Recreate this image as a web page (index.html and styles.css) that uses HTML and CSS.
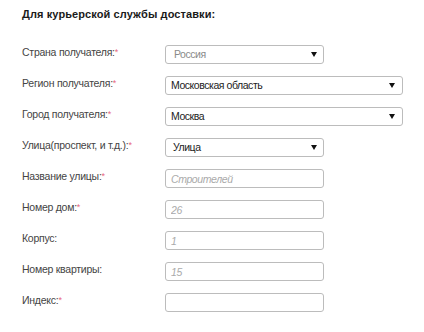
FILE: index.html
```html
<!DOCTYPE html>
<html lang="ru">
<head>
<meta charset="utf-8">
<link rel="stylesheet" href="styles.css">
</head>
<body>
<div class="form">
  <h2 class="title">Для курьерской службы доставки:</h2>
  <div class="rows">
    <div class="row">
      <label class="label">Страна получателя:<span class="req">*</span></label>
      <div class="sel short muted"><span class="val">Россия</span><svg class="arrow" width="6" height="5" viewBox="0 0 6 5"><path d="M0 0H6L3 5Z" fill="#111"/></svg></div>
    </div>
    <div class="row">
      <label class="label">Регион получателя:<span class="req">*</span></label>
      <div class="sel long"><span class="val">Московская область</span><svg class="arrow" width="6" height="5" viewBox="0 0 6 5"><path d="M0 0H6L3 5Z" fill="#111"/></svg></div>
    </div>
    <div class="row">
      <label class="label">Город получателя:<span class="req">*</span></label>
      <div class="sel long"><span class="val">Москва</span><svg class="arrow" width="6" height="5" viewBox="0 0 6 5"><path d="M0 0H6L3 5Z" fill="#111"/></svg></div>
    </div>
    <div class="row">
      <label class="label">Улица(проспект, и т.д.):<span class="req">*</span></label>
      <div class="sel short"><span class="val ind">Улица</span><svg class="arrow" width="6" height="5" viewBox="0 0 6 5"><path d="M0 0H6L3 5Z" fill="#111"/></svg></div>
    </div>
    <div class="row">
      <label class="label">Название улицы:<span class="req">*</span></label>
      <input class="inp" type="text" placeholder="Строителей">
    </div>
    <div class="row">
      <label class="label">Номер дом:<span class="req">*</span></label>
      <input class="inp" type="text" placeholder="26">
    </div>
    <div class="row">
      <label class="label">Корпус:</label>
      <input class="inp" type="text" placeholder="1">
    </div>
    <div class="row">
      <label class="label">Номер квартиры:</label>
      <input class="inp" type="text" placeholder="15">
    </div>
    <div class="row">
      <label class="label">Индекс:<span class="req">*</span></label>
      <input class="inp" type="text">
    </div>
  </div>
</div>
</body>
</html>
```
FILE: styles.css
```css
html, body {
  margin: 0;
  padding: 0;
  background: #fff;
}
body {
  font-family: "Liberation Sans", Arial, sans-serif;
  color: #333;
}
.form {
  padding: 7px 0 0 22px;
}
.title {
  margin: 0;
  font-size: 11px;
  line-height: 14px;
  font-weight: bold;
  letter-spacing: 0.1px;
  color: #1a1a1a;
}
.rows {
  margin-top: 24px;
  display: flex;
  flex-direction: column;
  gap: 12px;
}
.row {
  display: flex;
  align-items: flex-start;
  height: 19px;
}
.label {
  width: 143px;
  flex: none;
  padding-top: 1px;
  font-size: 10.5px;
  line-height: 13px;
  color: #444;
  letter-spacing: -0.25px;
}
.req {
  color: #e8677d;
  font-size: 9px;
  vertical-align: top;
}
.sel {
  position: relative;
  box-sizing: border-box;
  height: 19px;
  border: 1px solid #bcbcbc;
  border-radius: 3px;
  background: #fff;
  display: flex;
  align-items: center;
  font-size: 10.5px;
  letter-spacing: -0.45px;
  color: #222;
}
.sel.short { width: 159px; }
.sel.long { width: 238px; }
.sel .val {
  padding-left: 5px;
  line-height: 13px;
}
.sel .val.ind { padding-left: 7px; }
.sel.muted .val {
  color: #8a8a8a;
  padding-left: 8px;
}
.arrow {
  position: absolute;
  right: 6px;
  top: 6px;
}
.sel.long .arrow { right: 7px; }
.inp {
  box-sizing: border-box;
  width: 159px;
  height: 19px;
  margin: 0;
  padding: 0 5px;
  border: 1px solid #bcbcbc;
  border-radius: 3px;
  background: #fff;
  font-family: "Liberation Sans", Arial, sans-serif;
  font-size: 10.5px;
  letter-spacing: -0.4px;
  color: #333;
  outline: none;
}
.inp::placeholder {
  color: #aaa;
  font-style: italic;
  opacity: 1;
}
```
